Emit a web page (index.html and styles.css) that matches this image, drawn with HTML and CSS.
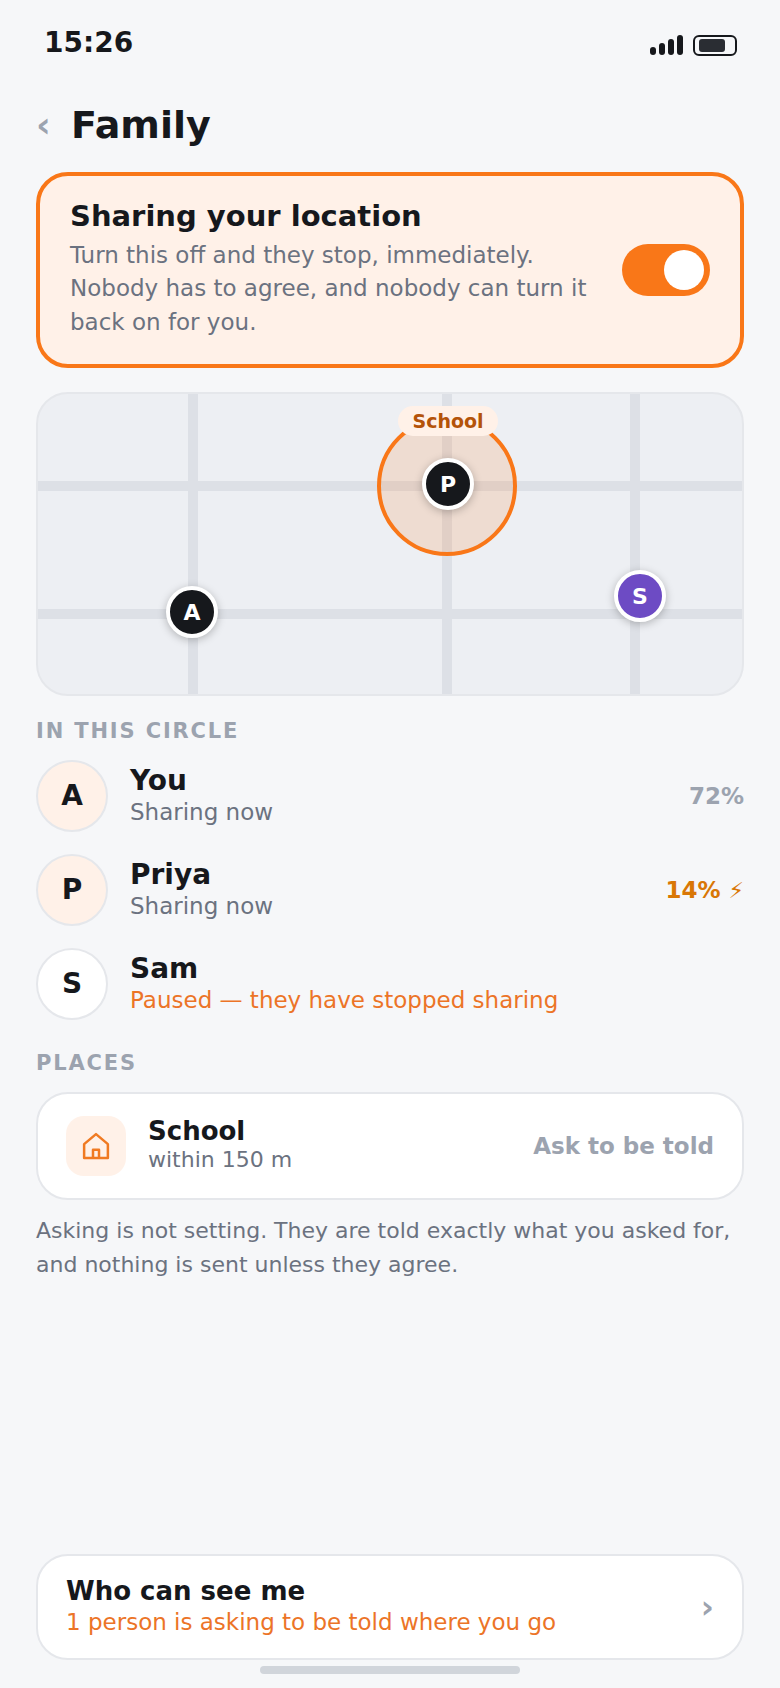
FILE: index.html
```html
<!DOCTYPE html>
<html lang="en">
<head>
    <meta charset="UTF-8">
    <meta name="viewport" content="width=device-width, initial-scale=1.0">
    <title>Family</title>
    <link rel="stylesheet" href="styles.css">
</head>
<body>
    <div class="screen">
        <div class="status-bar">
            <span class="time">15:26</span>
            <div class="status-icons">
                <div class="signal">
                    <span class="bar bar-1"></span>
                    <span class="bar bar-2"></span>
                    <span class="bar bar-3"></span>
                    <span class="bar bar-4"></span>
                </div>
                <div class="battery"><div class="battery-fill"></div></div>
            </div>
        </div>

        <div class="header">
            <span class="back">‹</span>
            <h1>Family</h1>
        </div>

        <div class="share-card">
            <div class="share-text">
                <h2>Sharing your location</h2>
                <p>Turn this off and they stop, immediately. Nobody has to agree, and nobody can turn it back on for you.</p>
            </div>
            <div class="toggle"><div class="knob"></div></div>
        </div>

        <!-- map: roads and pins sit on a free canvas -->
        <div class="map">
            <div class="road road-v road-v1"></div>
            <div class="road road-v road-v2"></div>
            <div class="road road-v road-v3"></div>
            <div class="road road-h road-h1"></div>
            <div class="road road-h road-h2"></div>
            <div class="fence"></div>
            <div class="fence-label">School</div>
            <div class="pin pin-p">P</div>
            <div class="pin pin-a">A</div>
            <div class="pin pin-s">S</div>
        </div>

        <div class="section-label circle-label">IN THIS CIRCLE</div>
        <div class="people">
            <div class="person">
                <div class="avatar">A</div>
                <div class="person-text">
                    <div class="name">You</div>
                    <div class="sub">Sharing now</div>
                </div>
                <div class="level">72%</div>
            </div>
            <div class="person">
                <div class="avatar">P</div>
                <div class="person-text">
                    <div class="name">Priya</div>
                    <div class="sub">Sharing now</div>
                </div>
                <div class="level level-low">14% <span class="bolt">⚡&#xFE0E;</span></div>
            </div>
            <div class="person">
                <div class="avatar avatar-paused">S</div>
                <div class="person-text">
                    <div class="name">Sam</div>
                    <div class="sub sub-orange">Paused — they have stopped sharing</div>
                </div>
            </div>
        </div>

        <div class="section-label places-label">PLACES</div>
        <div class="place-card">
            <div class="place-icon">
                <svg width="30" height="30" viewBox="0 0 24 24" fill="none" stroke="#f07a22" stroke-width="2" stroke-linejoin="round">
                    <path d="M2.500 10.500 12 2.500l9.500 8v11H2.500z"/>
                    <path d="M9.600 21.500V15h4.800v6.500"/>
                </svg>
            </div>
            <div class="person-text place-text">
                <div class="name">School</div>
                <div class="sub">within 150 m</div>
            </div>
            <div class="ask">Ask to be told</div>
        </div>
        <p class="note">Asking is not setting. They are told exactly what you asked for, and nothing is sent unless they agree.</p>

        <div class="who-card">
            <div class="who-text">
                <div class="name">Who can see me</div>
                <div class="sub sub-orange">1 person is asking to be told where you go</div>
            </div>
            <span class="chevron">›</span>
        </div>
        <div class="home-indicator"></div>
    </div>
</body>
</html>
```

FILE: styles.css
```css
* {
    box-sizing: border-box;
}
body {
    margin: 0;
    background-color: #f6f7f9;
    font-family: 'DejaVu Sans', sans-serif;
    color: #16181c;
}
.screen {
    height: 1688px;
    padding: 0 36px;
    display: flex;
    flex-direction: column;
    overflow: hidden;
}

/* status bar */
.status-bar {
    display: flex;
    justify-content: space-between;
    align-items: center;
    height: 34px;
    margin-top: 26px;
    padding: 0 7px 0 8px;
}
.time {
    font-size: 28px;
    line-height: 34px;
    font-weight: 700;
}
.status-icons {
    display: flex;
    align-items: flex-end;
    gap: 10px;
    margin-top: 5px;
}
.signal {
    display: flex;
    align-items: flex-end;
    gap: 3px;
    height: 20px;
    margin-bottom: 1px;
}
.bar {
    width: 6px;
    background: #16181c;
    border-radius: 3px;
}
.bar-1 { height: 8px; }
.bar-2 { height: 12px; }
.bar-3 { height: 16px; }
.bar-4 { height: 20px; }
.battery {
    width: 44px;
    height: 21px;
    border: 2px solid #16181c;
    border-radius: 6px;
    padding: 2px 4px;
}
.battery-fill {
    width: 26px;
    height: 13px;
    background: #2a2d33;
    border-radius: 3px;
}

/* header */
.header {
    display: flex;
    align-items: center;
    gap: 19px;
    height: 50px;
    margin-top: 40px;
}
.back {
    width: 16px;
    font-size: 36px;
    line-height: 50px;
    font-weight: 700;
    color: #9ca3af;
}
.header h1 {
    margin: 0;
    font-size: 38px;
    line-height: 50px;
    font-weight: 700;
}

/* share card */
.share-card {
    display: flex;
    align-items: center;
    gap: 30px;
    height: 196px;
    margin-top: 22px;
    padding: 0 30px;
    background: #fff1e8;
    border: 4px solid #f97718;
    border-radius: 32px;
}
.share-text {
    flex: 1;
    padding-bottom: 3px;
}
.share-text h2 {
    margin: 0 0 5px;
    font-size: 29px;
    line-height: 36px;
    font-weight: 700;
}
.share-text p {
    margin: 0;
    font-size: 23px;
    line-height: 33.4px;
    color: #6b7280;
}
.toggle {
    flex: none;
    width: 88px;
    height: 52px;
    padding: 6px;
    display: flex;
    justify-content: flex-end;
    background: #f97718;
    border-radius: 26px;
}
.knob {
    width: 40px;
    height: 40px;
    background: #fff;
    border-radius: 50%;
}

/* map */
.map {
    position: relative;
    flex: none;
    height: 304px;
    margin-top: 24px;
    background: #edeff3;
    border: 2px solid #e5e7eb;
    border-radius: 32px;
    overflow: hidden;
}
.road {
    position: absolute;
    background: #dde0e6;
}
.road-v {
    top: 0;
    bottom: 0;
    width: 10px;
}
.road-h {
    left: 0;
    right: 0;
    height: 10px;
}
.road-v1 { left: 150px; }
.road-v2 { left: 404px; }
.road-v3 { left: 592px; }
.road-h1 { top: 87px; }
.road-h2 { top: 215px; }
.fence {
    position: absolute;
    left: 339px;
    top: 22px;
    width: 140px;
    height: 140px;
    background: rgba(249,115,22,0.15);
    border: 4px solid #f97718;
    border-radius: 50%;
}
.fence-label {
    position: absolute;
    left: 360px;
    top: 12px;
    width: 100px;
    height: 30px;
    background: #fff1e8;
    border-radius: 15px;
    text-align: center;
    font-size: 19px;
    line-height: 30px;
    font-weight: 700;
    color: #b45309;
}
.pin {
    position: absolute;
    width: 52px;
    height: 52px;
    background: #16181c;
    border: 4px solid #fff;
    border-radius: 50%;
    box-shadow: 0 2px 8px rgba(0,0,0,0.25);
    text-align: center;
    font-size: 22px;
    line-height: 45px;
    font-weight: 700;
    color: #fff;
}
.pin-p { left: 384px; top: 64px; }
.pin-a { left: 128px; top: 192px; }
.pin-s { left: 576px; top: 176px; background: #6d4bc4; }

/* sections */
.section-label {
    font-size: 21px;
    line-height: 26px;
    font-weight: 700;
    letter-spacing: 1.85px;
    color: #9ca3af;
}
.circle-label {
    margin-top: 22px;
}
.places-label {
    margin-top: 30px;
}
.people {
    display: flex;
    flex-direction: column;
    gap: 22px;
    margin-top: 16px;
}
.person {
    display: flex;
    align-items: center;
    gap: 22px;
    height: 72px;
}
.avatar {
    flex: none;
    width: 72px;
    height: 72px;
    background: #fff1e8;
    border: 2px solid #e5e7eb;
    border-radius: 50%;
    text-align: center;
    font-size: 28px;
    line-height: 68px;
    font-weight: 700;
}
.avatar-paused {
    background: #fff;
}
.person-text {
    flex: 1;
}
.name {
    font-size: 28px;
    line-height: 32px;
    font-weight: 700;
}
.sub {
    font-size: 23px;
    line-height: 30px;
    color: #6b7280;
}
.sub-orange {
    color: #ec7427;
}
.level {
    font-size: 23px;
    font-weight: 700;
    color: #9ca3af;
}
.level-low {
    color: #d97706;
}
.bolt {
    font-weight: 400;
    font-size: 22px;
}

/* places */
.place-card {
    display: flex;
    align-items: center;
    gap: 22px;
    height: 108px;
    margin-top: 16px;
    padding: 0 28px;
    background: #fff;
    border: 2px solid #e5e7eb;
    border-radius: 32px;
}
.place-icon {
    flex: none;
    width: 60px;
    height: 60px;
    display: flex;
    align-items: center;
    justify-content: center;
    background: #fff1e8;
    border-radius: 18px;
}
.place-text {
    padding-bottom: 2px;
}
.place-text .name {
    font-size: 26px;
    line-height: 30px;
}
.place-text .sub {
    font-size: 22px;
    line-height: 28px;
}
.ask {
    font-size: 23px;
    font-weight: 700;
    color: #9ca3af;
}
.note {
    margin: 14px 0 0;
    font-size: 22px;
    line-height: 34px;
    color: #6b7280;
}

/* bottom */
.who-card {
    display: flex;
    align-items: center;
    height: 106px;
    margin-top: auto;
    padding: 0 28px 2px 28px;
    background: #fff;
    border: 2px solid #e5e7eb;
    border-radius: 32px;
}
.who-text {
    flex: 1;
}
.who-text .name {
    font-size: 26px;
    line-height: 32px;
}
.who-text .sub {
    line-height: 30px;
}
.chevron {
    margin-top: 2px;
    font-size: 32px;
    font-weight: 700;
    color: #9ca3af;
}
.home-indicator {
    flex: none;
    align-self: center;
    width: 260px;
    height: 8px;
    margin: 6px 0 14px;
    background: #d1d5db;
    border-radius: 4px;
}
```
